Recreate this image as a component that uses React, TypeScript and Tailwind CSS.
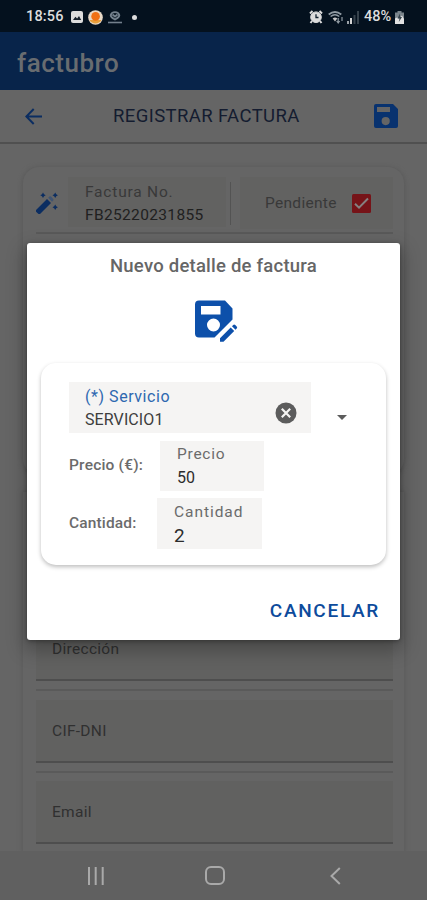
import React from 'react';

function StatusBar() {
  return (
    <div className="flex h-8 shrink-0 items-center bg-[#04111e] pl-[26px] pr-[23px] pt-[2px] text-[14.500px] font-medium text-[#dddddd]">
      <span className="w-[38px] whitespace-nowrap tracking-[0.150px]">18:56</span>
      <svg className="ml-[7px]" width="12" height="12" viewBox="0 0 12 12">
        <rect width="12" height="12" rx="2" fill="#dcdcdc" />
        <path d="M2 9l2.4-3.3 1.7 1.9L8 5l2.200 4z" fill="#16202b" />
      </svg>
      <svg className="ml-[5px]" width="15" height="15" viewBox="0 0 15 15">
        <circle cx="7.5" cy="7.5" r="7.3" fill="#e8d9c8" />
        <path d="M1.500 10h12a7 7 0 0 1-12 0z" fill="#e9a03c" />
        <circle cx="7.6" cy="6.4" r="4.3" fill="#f07016" />
      </svg>
      <svg className="ml-[5px]" width="14" height="14" viewBox="0 0 14 14" fill="none" stroke="#73808c">
        <path d="M2.700 5.200a4.400 3.900 0 0 1 8.600 0c0 2-2 3-4.300 4.300C4.700 8.200 2.700 7.200 2.700 5.200z" strokeWidth="1.900" />
        <path d="M4.500 4.500l2.500 2 2.500-2" strokeWidth="1.800" />
        <path d="M0 12.500h14" strokeWidth="1.600" />
      </svg>
      <span className="ml-2.5 h-[5px] w-[5px] rounded-full bg-[#dcdcdc]" />
      <div className="ml-auto flex items-center">
        <svg width="14" height="14" viewBox="0 0 14 14" fill="none" stroke="#dcdcdc">
          <path d="M1 3.500L3.500 1M13 3.500L10.500 1M3 11l-1.500 2M11 11l1.500 2" strokeWidth="2" />
          <circle cx="7" cy="7.200" r="5.300" fill="#dcdcdc" />
          <path d="M7 4.200v3.300h2.500" stroke="#10202e" strokeWidth="1.300" />
        </svg>
        <svg className="ml-[5px]" width="15" height="14" viewBox="0 0 15 14" fill="none" stroke="#909ba3">
          <path d="M.7 4.500Q7 -.5 13.300 4.500" strokeWidth="1.700" />
          <path d="M2.600 6.500Q7 3 11.300 6.500" strokeWidth="1.500" />
          <path d="M4.700 8.500Q7 6.700 9.300 8.500L7 11.500z" fill="#c5c5c5" stroke="none" />
          <path d="M10.200 8v4.500M8.700 11l1.500 2 1.500-2M14 7v4" strokeWidth="1.200" />
        </svg>
        <svg className="ml-[3px]" width="13" height="13" viewBox="0 0 13 13">
          <path d="M1 10h2v3H1z" fill="#9aa1a7" />
          <path d="M4 7h2v6H4z" fill="#d5d5d5" />
          <path d="M7.500 4h2v9h-2zM11 0h2v13h-2z" fill="#36424c" />
        </svg>
        <span className="ml-[5px] mr-px w-[30px] whitespace-nowrap">48%</span>
        <svg width="9" height="13" viewBox="0 0 9 13">
          <path d="M2.500 0h4v1.500H9V13H0V1.500h2.500z" fill="#7b858c" />
          <path d="M0 7.500l2-1 2 1 3-3L9 8v5H0z" fill="#e2e2e2" />
          <path d="M5 2.500L2.500 7.500h2l-.7 3.500L7 6H5z" fill="#33404a" />
        </svg>
      </div>
    </div>
  );
}

function SaveIcon() {
  return (
    <svg width="24" height="24" viewBox="0 0 24 24">
      <path
        fillRule="evenodd"
        d="M2 0h17l5 5v17a2 2 0 0 1-2 2H2a2 2 0 0 1-2-2V2a2 2 0 0 1 2-2zM3 3v5h13V3zM11.700 13a4.100 4.100 0 1 0 0 8.200 4.100 4.100 0 0 0 0-8.200z"
        fill="#08326f"
      />
    </svg>
  );
}

function SaveEditIcon() {
  return (
    <svg width="43" height="43" viewBox="0 0 43 43" fill="#0d50aa">
      <path
        fillRule="evenodd"
        d="M4 .5h26l7.500 8v11L25 32l-5.500 5.500H4q-4 0-4-4v-29q0-4 4-4zM6 6v8.500h19.500V6zM18.500 18.500a6.500 6.500 0 1 0 0 13 6.500 6.500 0 0 0 0-13z"
      />
      <path d="M25 38.200L35.700 27.500l3.500 3.500L28.500 41.800H25zM37 26.200l1.200-1.200q1-1 2 0l1.500 1.500q1 1 0 2l-1.200 1.200z" />
    </svg>
  );
}

function MagicIcon() {
  return (
    <svg width="22" height="22" viewBox="0 0 22 22" fill="#0b2d61">
      <path d="M0 18L11 7l4 4L4 22q-1 .6-2-.4L.3 20q-.9-1-.3-2z" />
      <path d="M12.200 5.800l1.200-1.200q.8-.8 1.600 0L17.200 7q.8.8 0 1.600L16 9.800z" fill="#405472" />
      <path d="M7 .5l1 1.700 1.700 1L8 4.200 7 5.900 6 4.200 4.300 3.200 6 2.200zM19.200.5l1 1.700 1.700 1-1.700 1-1 1.700-1-1.700-1.700-1 1.700-1zM19.200 12.500l1 1.700 1.700 1-1.700 1-1 1.700-1-1.700-1.700-1 1.700-1z" />
    </svg>
  );
}

function InvoiceCard() {
  return (
    <div className="h-[308px] shrink-0 rounded-[16px] bg-[#656565] pl-[13px] pr-[11px] pt-2.5 shadow-[0_1px_4px_1px_#5a5a5a]">
      <div className="flex h-[57px] border-b-2 border-[#595959]">
        <div className="flex w-8 items-start pt-[15px]">
          <MagicIcon />
        </div>
        <div className="h-[50px] w-[158px] bg-[#626261] pl-[17px] pt-[5px]">
          <p className="text-[15.500px] leading-5 tracking-[0.800px] text-[#393939]">Factura No.</p>
          <p className="mt-[3px] whitespace-nowrap text-[15.500px] leading-5 tracking-[0.350px] text-[#202020]">FB25220231855</p>
        </div>
        <div className="ml-1 mt-[5px] h-[43px] w-px bg-[#535353]" />
        <div className="ml-[9px] flex h-[52px] flex-1 items-center bg-[#626261] pl-[25px]">
          <span className="w-[87px] pt-[2px] text-[15.500px] tracking-[0.300px] text-[#393939]">Pendiente</span>
          <svg width="19" height="19" viewBox="0 0 19 19">
            <rect width="19" height="19" rx="1.500" fill="#761318" />
            <path d="M3 9.700l4 4L16 4.500" fill="none" stroke="#858080" strokeWidth="2" />
          </svg>
        </div>
      </div>
    </div>
  );
}

function Field({ label }: { label: string }) {
  return (
    <div className="flex h-[63px] shrink-0 items-center border-b-2 border-[#4e4e4e] bg-[#616160] pl-4 pt-[2px] text-[15.500px] tracking-[0.300px] text-[#303030]">
      {label}
    </div>
  );
}

function ClientCard() {
  return (
    <div className="mt-[17px] flex flex-1 flex-col justify-end bg-[#656565] pl-[13px] pr-[11px] pb-[7px] shadow-[0_0_4px_1px_#5b5b5b]">
      <Field label="Dirección" />
      <div className="mb-[9px] mt-2 shrink-0 border-t-2 border-[#5a5a5a]" />
      <Field label="CIF-DNI" />
      <div className="mb-2 mt-2 shrink-0 border-t-2 border-[#5a5a5a]" />
      <Field label="Email" />
    </div>
  );
}

function NavBar() {
  return (
    <div className="relative flex h-[49px] shrink-0 items-center bg-[#606060] pl-[87px]">
      <svg width="17" height="18" viewBox="0 0 17 18" stroke="#a9a9a9" strokeWidth="2">
        <path d="M2 0v18M8.700 0v18M15.700 0v18" />
      </svg>
      <div className="ml-[101px] h-[19px] w-5 rounded-[6px] border-2 border-[#a9a9a9]" />
      <svg className="ml-[105px]" width="11" height="18" viewBox="0 0 11 18" fill="none" stroke="#a9a9a9" strokeWidth="2">
        <path d="M9.800 1L1.500 9l8.300 8" />
      </svg>
    </div>
  );
}

function DetailDialog() {
  return (
    <div className="absolute left-[27px] top-[243px] flex h-[397px] w-[373px] flex-col rounded-[3px] bg-white px-[14px] shadow-[0_8px_18px_3px_rgba(0,0,0,0.25),0_1px_4px_rgba(0,0,0,0.35)]">
      <h2 className="pt-3 text-center text-[18.500px] font-medium leading-[22px] tracking-[0.230px] text-[#666666]">
        Nuevo detalle de factura
      </h2>
      <div className="mt-[23px] flex justify-center pl-[5px]">
        <SaveEditIcon />
      </div>
      <div className="mt-5 h-[202px] rounded-[15px] bg-white px-7 pt-[19px] shadow-[0_2px_4px_rgba(0,0,0,0.26)]">
        <div className="flex h-[51px]">
          <div className="flex w-[242px] bg-[#f5f4f3] pl-4">
            <div className="flex-1 pt-[3px]">
              <p className="text-[16px] leading-[23px] tracking-[0.550px] text-[#2e68b0]">(*) Servicio</p>
              <p className="text-[16px] leading-6 tracking-[0.100px] text-[#3d3d3d]">SERVICIO1</p>
            </div>
            <svg className="mr-[14px] mt-5" width="22" height="22" viewBox="0 0 22 22">
              <circle cx="11" cy="11" r="10.500" fill="#5c5c5c" />
              <path d="M6.800 6.800l8.400 8.400M15.200 6.800l-8.400 8.400" stroke="#f5f4f3" strokeWidth="2.200" />
            </svg>
          </div>
          <svg className="ml-[26px] mt-[33px]" width="10" height="5" viewBox="0 0 10 5">
            <path d="M0 0h10L5 5z" fill="#5c5c5c" />
          </svg>
        </div>
        <div className="mt-[7px] flex h-[51px] items-center">
          <span className="w-[91px] pt-px text-[15.500px] font-medium tracking-[0.200px] text-[#6b6b6b]">Precio (€):</span>
          <div className="h-[50px] w-[104px] bg-[#f5f4f3] pl-[17px] pt-[2px]">
            <p className="text-[15.500px] leading-[22px] tracking-[0.750px] text-[#6b6b6b]">Precio</p>
            <p className="text-[16px] leading-[25px] text-[#2c2c2c]">50</p>
          </div>
        </div>
        <div className="mt-[7px] flex h-[51px] items-center">
          <span className="w-[88px] pt-px text-[15.500px] font-medium tracking-[0.150px] text-[#6b6b6b]">Cantidad:</span>
          <div className="h-[51px] w-[105px] bg-[#f5f4f3] pl-[17px] pt-[3px]">
            <p className="text-[15.500px] leading-[22px] tracking-[0.950px] text-[#6b6b6b]">Cantidad</p>
            <p className="text-[19px] leading-[26px] text-[#2c2c2c]">2</p>
          </div>
        </div>
      </div>
      <button className="mt-[34px] self-end pr-[6px] text-[19px] font-medium leading-6 tracking-[1.700px] text-[#0d4b9c]">
        CANCELAR
      </button>
    </div>
  );
}

export default function App() {
  return (
    <div className="relative flex h-[900px] w-[427px] flex-col overflow-hidden bg-[#656565] font-['Roboto','Liberation_Sans',sans-serif]">
      <StatusBar />
      <header className="flex h-[58px] shrink-0 items-center bg-[#08244a] pl-[17px] pt-1">
        <h1 className="text-[26px] font-medium tracking-[0.520px] text-[#686c70]">factubro</h1>
      </header>
      <div className="flex h-[54px] shrink-0 items-center border-b-2 border-[#505050] bg-[#656565]">
        <svg className="ml-[25px]" width="17" height="17" viewBox="0 0 17 17" fill="none" stroke="#0b2d61" strokeWidth="2">
          <path d="M17 8.500H1.500M8.700 1L1.300 8.500l7.400 7.500" />
        </svg>
        <span className="ml-[71px] w-[261px] pt-px text-[18.500px] tracking-[0.400px] text-[#141c30]">REGISTRAR FACTURA</span>
        <SaveIcon />
      </div>
      <main className="flex flex-1 flex-col px-[23px] pt-[23px]">
        <InvoiceCard />
        <ClientCard />
      </main>
      <NavBar />
      <DetailDialog />
    </div>
  );
}
